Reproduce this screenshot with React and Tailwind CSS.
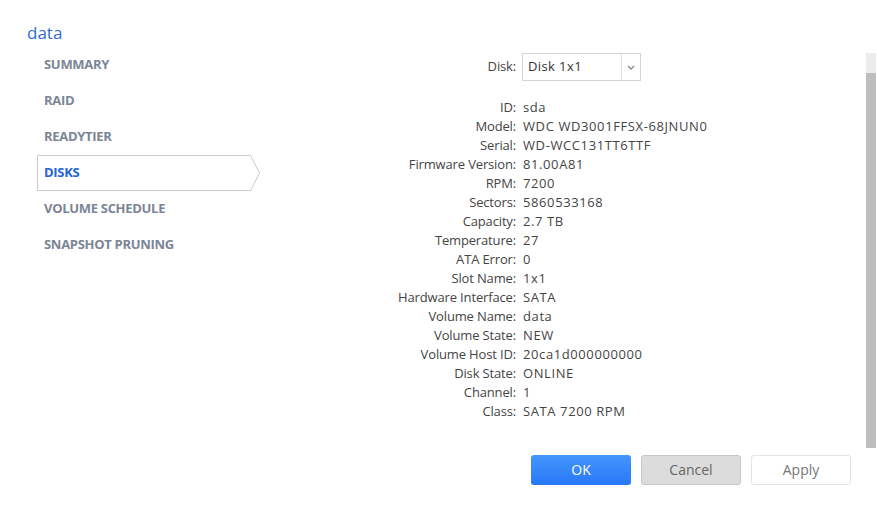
import React from "react";

const rows = [
  ["ID", "sda"],
  ["Model", "WDC WD3001FFSX-68JNUN0"],
  ["Serial", "WD-WCC131TT6TTF"],
  ["Firmware Version", "81.00A81"],
  ["RPM", "7200"],
  ["Sectors", "5860533168"],
  ["Capacity", "2.7 TB"],
  ["Temperature", "27"],
  ["ATA Error", "0"],
  ["Slot Name", "1x1"],
  ["Hardware Interface", "SATA"],
  ["Volume Name", "data"],
  ["Volume State", "NEW"],
  ["Volume Host ID", "20ca1d000000000"],
  ["Disk State", "ONLINE"],
  ["Channel", "1"],
  ["Class", "SATA 7200 RPM"],
];

const nav = ["SUMMARY", "RAID", "READYTIER", "DISKS", "VOLUME SCHEDULE", "SNAPSHOT PRUNING"];

export default function App() {
  return (
    <div
      className="w-[877px] h-[512px] bg-white overflow-hidden flex flex-col"
      style={{ fontFamily: '"Open Sans", "Liberation Sans", sans-serif' }}
    >
      <div className="flex h-[455px]">
        {/* sidebar */}
        <div className="w-[260px] shrink-0 pt-[21px]">
          <div className="pl-[27px] text-[17px] leading-[24px] text-[#2e6bd6]">data</div>
          <div className="mt-[2px] pl-[37px] flex flex-col">
            {nav.map((n) => {
              const active = n === "DISKS";
              return (
                <div key={n} className="relative h-[36px] flex items-center pl-[7px]">
                  {active && (
                    <svg className="absolute left-0 top-0" width="224" height="37" viewBox="0 0 224 37">
                      <path d="M0.5 0.5 H213.5 L222.5 18 L213.5 35.5 H0.5 Z" fill="white" stroke="#c9c9c9" strokeWidth="1" />
                    </svg>
                  )}
                  <span
                    className={
                      "relative text-[13px] font-bold tracking-[-0.3px] " +
                      (active ? "text-[#2563d8]" : "text-[#7b8596]")
                    }
                  >
                    {n}
                  </span>
                </div>
              );
            })}
          </div>
        </div>

        {/* form */}
        <div className="flex-1 pt-[53px] text-[13px] text-[#444]">
          <div className="flex items-center h-[28px]">
            <div className="w-[256px] text-right tracking-[-0.15px]">Disk:</div>
            <div className="ml-[6px] w-[119px] h-[28px] border border-[#d4d4d4] flex items-stretch bg-white">
              <div className="flex-1 flex items-center pl-[5px] text-[#333] tracking-[0.4px]">Disk 1x1</div>
              <div className="w-[19px] border-l border-[#e2e2e2] flex items-center justify-center">
                <svg width="8" height="5" viewBox="0 0 8 5">
                  <path d="M1 1 L4 4 L7 1" fill="none" stroke="#8a8a8a" strokeWidth="1.3" />
                </svg>
              </div>
            </div>
          </div>
          <div className="mt-[17px] flex flex-col">
            {rows.map(([k, v]) => (
              <div key={k} className="flex h-[19px] leading-[19px]">
                <div className="w-[256px] text-right tracking-[-0.15px]">{k}:</div>
                <div className="ml-[7px] tracking-[0.6px]">{v}</div>
              </div>
            ))}
          </div>
        </div>

        {/* scrollbar */}
        <div className="w-[10px] mr-[1px] mt-[53px] h-[395px] flex flex-col shrink-0">
          <div className="h-[20px] bg-[#ececec]" />
          <div className="flex-1 bg-[#bdbdbd]" />
        </div>
      </div>

      {/* buttons */}
      <div className="flex justify-end gap-[10px] pr-[26px]">
        <button className="w-[100px] h-[30px] rounded-[3px] bg-gradient-to-b from-[#4396fd] to-[#2878f7] text-white text-[14px] leading-[28px]">
          OK
        </button>
        <button className="w-[100px] h-[30px] rounded-[3px] bg-[#dcdcdc] border border-[#c6c6c6] text-[#666] text-[14px] leading-[26px]">
          Cancel
        </button>
        <button className="w-[100px] h-[30px] rounded-[3px] bg-white border border-[#e4e4e4] text-[#777] text-[14px] leading-[26px]">
          Apply
        </button>
      </div>
    </div>
  );
}
